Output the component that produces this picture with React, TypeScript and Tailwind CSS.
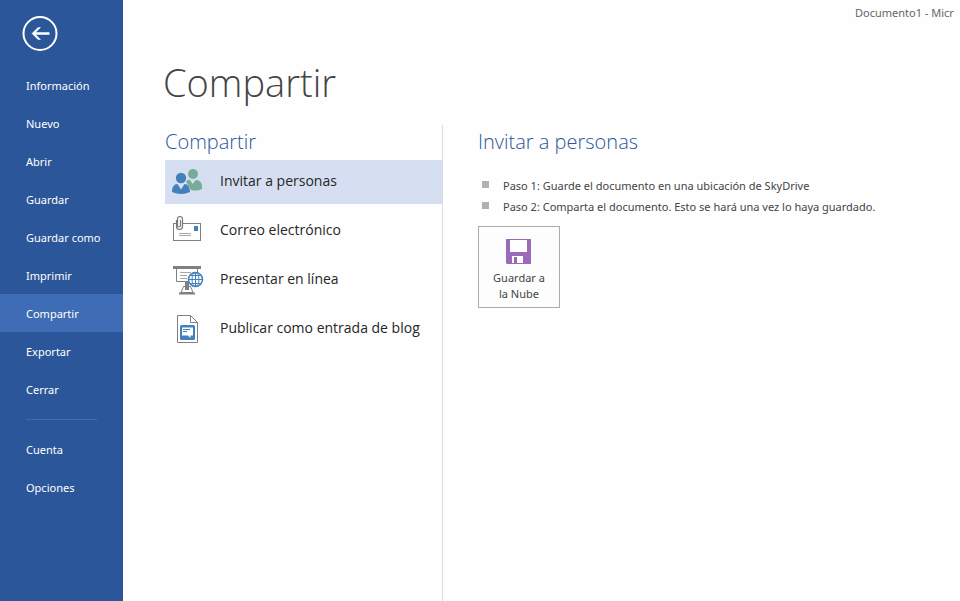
import { useState } from "react";
import type { ReactNode } from "react";

const primaryItems = [
  "Información",
  "Nuevo",
  "Abrir",
  "Guardar",
  "Guardar como",
  "Imprimir",
  "Compartir",
  "Exportar",
  "Cerrar",
];
const secondaryItems = ["Cuenta", "Opciones"];

function PeopleIcon() {
  return (
    <svg width="32" height="32" viewBox="0 0 32 32" aria-hidden="true">
      <g fill="#78ab98">
        <circle cx="21" cy="8" r="5" />
        <path d="M14 15.500C16 14 17.500 13.500 18 14L20.500 18L24 14C28 14 30 17 30 20.500V23Q25 25.500 19 24Z" />
      </g>
      <g fill="#4380bd">
        <circle cx="9" cy="12.500" r="6" fill="#d5dff1" />
        <circle cx="9" cy="12" r="5.200" />
        <path d="M0 26C0 21 2 18 5.500 18L9 23.500L12.500 18C16 18 18 21 18 26Q9 30 0 26Z" />
      </g>
    </svg>
  );
}

function MailIcon() {
  return (
    <svg width="32" height="32" viewBox="0 0 32 32" fill="none" aria-hidden="true">
      <rect x="1.500" y="8.500" width="27" height="17" fill="#fff" stroke="#808080" />
      <path d="M7 18.500h12M7 20.500h12" stroke="#a8a8a8" />
      <path d="M22 11h4v5h-4z" fill="#4380bd" />
      <path d="M4 7h7v5H4z" fill="#fff" />
      <path
        d="M4.500 5v6.500a3 3 0 0 0 6 0V4a2.500 2.500 0 0 0-5 0v6.500a1.500 1.500 0 0 0 3 0V5"
        stroke="#777"
        strokeWidth="1.200"
      />
    </svg>
  );
}

function PresentIcon() {
  return (
    <svg width="32" height="32" viewBox="0 0 32 32" fill="none" aria-hidden="true">
      <path d="M4.500 4v13.500h21V4" fill="#fff" stroke="#808080" />
      <path d="M1 2h28v3H1z" fill="#808080" />
      <path d="M8 8.500h11M8 11.500h7M8 14.500h7" stroke="#a8a8a8" />
      <path d="M13 18h4v5h-4z" fill="#808080" />
      <path d="M11.500 22.500h7l2.500 6H9z" fill="#fff" stroke="#808080" />
      <path d="M13 20h4v6h-4z" fill="#808080" />
      <path d="M7 29.500h16" stroke="#808080" strokeWidth="2" />
      <circle cx="23.500" cy="15.500" r="7" fill="#fff" stroke="#4380bd" strokeWidth="1.500" />
      <ellipse cx="23.500" cy="15.500" rx="3.500" ry="7" stroke="#4380bd" />
      <path d="M16.500 15.500h14M23.500 8.500v14M18 11.500h11M18 19.500h11" stroke="#4380bd" />
    </svg>
  );
}

function BlogIcon() {
  return (
    <svg width="32" height="32" viewBox="0 0 32 32" fill="none" aria-hidden="true">
      <path d="M5.500 2.500h13l7 7v20h-20z" fill="#fff" stroke="#808080" />
      <path d="M18.500 2.500v7h7" stroke="#808080" />
      <rect x="8" y="12" width="15" height="15" rx="1.500" fill="#4380bd" />
      <path d="M10 14.500h11v8h-2.500V25L16 22.500h-6z" fill="#fff" />
      <path d="M11 16.500h7M11 18.500h4" stroke="#4380bd" />
    </svg>
  );
}

const shareOptions: { label: string; icon: ReactNode }[] = [
  { label: "Invitar a personas", icon: <PeopleIcon /> },
  { label: "Correo electrónico", icon: <MailIcon /> },
  { label: "Presentar en línea", icon: <PresentIcon /> },
  { label: "Publicar como entrada de blog", icon: <BlogIcon /> },
];

const steps = [
  "Paso 1: Guarde el documento en una ubicación de SkyDrive",
  "Paso 2: Comparta el documento. Esto se hará una vez lo haya guardado.",
];

export default function App() {
  const [page, setPage] = useState("Compartir");
  const [option, setOption] = useState("Invitar a personas");

  const navButton = (label: string) => (
    <li key={label}>
      <button
        type="button"
        onClick={() => setPage(label)}
        aria-current={page === label ? "page" : undefined}
        className={
          "block h-[38px] w-full pt-0.5 pl-[26px] text-left font-['Noto_Sans',sans-serif] text-[11px] whitespace-nowrap " +
          (page === label ? "bg-[#3e6db5]" : "hover:bg-[#3e6db5]")
        }
      >
        {label}
      </button>
    </li>
  );

  return (
    <div className="flex min-h-screen overflow-hidden bg-[#fefefe] font-['Open_Sans',sans-serif] text-[#444]">
      <nav aria-label="Archivo" className="w-[123px] shrink-0 bg-[#2b579a] pt-4 text-white">
        <button type="button" aria-label="Atrás" className="ml-[22px] block">
          <svg width="36" height="36" viewBox="0 0 36 36" fill="none" stroke="#fff" aria-hidden="true">
            <circle cx="18" cy="17.500" r="16.500" strokeWidth="2" />
            <path d="M27.500 17.500H12" strokeWidth="2.500" />
            <path d="M18.500 11.500H16L10 17.500l6 6h2.500L12.500 17.500z" fill="#fff" strokeWidth=".5" />
          </svg>
        </button>
        <ul className="pt-3.5">{primaryItems.map(navButton)}</ul>
        <hr className="mx-[26px] mt-[11px] mb-2.5 border-[#3e6db5]" />
        <ul>{secondaryItems.map(navButton)}</ul>
      </nav>

      <main className="flex min-w-0 flex-1 flex-col">
        <div className="flex h-[26px] justify-end">
          <p className="w-[105px] font-['Noto_Sans',sans-serif] text-[11px] leading-[26px] whitespace-nowrap text-[#666]">
            Documento1 - Micr
          </p>
        </div>
        <h1 className="pt-7 pb-[15px] pl-10 text-[38px] leading-14 font-light">Compartir</h1>
        <div className="flex flex-1">
          <section className="ml-[42px] w-[278px] shrink-0 border-r border-[#dcdcdc]">
            <h2 className="h-[35px] text-xl leading-[34px] font-light text-[#2b579a]">Compartir</h2>
            <ul className="flex flex-col gap-[5px]">
              {shareOptions.map(({ label, icon }) => (
                <li key={label}>
                  <button
                    type="button"
                    onClick={() => setOption(label)}
                    aria-pressed={option === label}
                    className={
                      "flex h-11 w-full items-center gap-4 pl-[7px] text-sm whitespace-nowrap text-[#262626] " +
                      (option === label ? "bg-[#d5dff1]" : "hover:bg-[#e8eef8]")
                    }
                  >
                    {icon}
                    <span className="pb-0.5">{label}</span>
                  </button>
                </li>
              ))}
            </ul>
          </section>

          <section className="min-w-0 flex-1 pl-[35px]">
            <h2 className="h-[35px] text-xl leading-[34px] font-light text-[#2b579a]">Invitar a personas</h2>
            <ul className="pt-[15px] pl-1 font-['Noto_Sans',sans-serif] text-[11px] leading-[21px]">
              {steps.map((step) => (
                <li key={step} className="flex gap-3.5">
                  <span className="mt-[6px] size-[7px] shrink-0 bg-[#b1b1b1]" />
                  {step}
                </li>
              ))}
            </ul>
            <button
              type="button"
              className="mt-[9px] flex h-[82px] w-[82px] flex-col items-center border border-[#ababab] bg-[#fdfdfd] pt-3 font-['Noto_Sans',sans-serif] text-[11px] leading-4"
            >
              <svg width="26" height="26" viewBox="0 0 26 26" className="mb-[5px] shrink-0" aria-hidden="true">
                <path d="M0 0h25v25H1l-1-1z" fill="#9a69b9" />
                <path d="M4 1h17v12H4zM6 17h11v7H6z" fill="#fff" />
                <path d="M8 18h3v6H8z" fill="#9a69b9" />
              </svg>
              Guardar a<br />
              la Nube
            </button>
          </section>
        </div>
      </main>
    </div>
  );
}
